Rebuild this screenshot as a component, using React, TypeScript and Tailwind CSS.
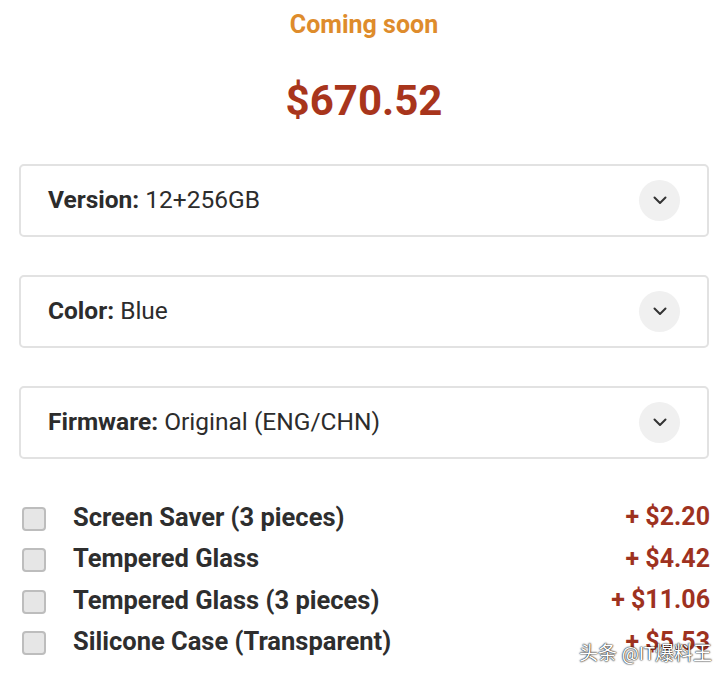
const options = [
  { label: "Version:", value: "12+256GB" },
  { label: "Color:", value: "Blue" },
  { label: "Firmware:", value: "Original (ENG/CHN)" },
]

const extras = [
  { name: "Screen Saver (3 pieces)", price: "+ $2.20" },
  { name: "Tempered Glass", price: "+ $4.42" },
  { name: "Tempered Glass (3 pieces)", price: "+ $11.06" },
  { name: "Silicone Case (Transparent)", price: "+ $5.53" },
]

const Chevron = () => (
  <div className="w-[41px] h-[41px] rounded-full bg-[#f0f0f0] flex items-center justify-center">
    <svg width="14" height="9" viewBox="0 0 14 9" fill="none">
      <path d="M1.5 1.5 7 7l5.5-5.5" stroke="#333" strokeWidth="2" strokeLinecap="round" strokeLinejoin="round" />
    </svg>
  </div>
)

export default function App() {
  return (
    <div
      className="w-[728px] h-[680px] bg-white overflow-hidden relative"
      style={{ fontFamily: "Roboto, 'Noto Sans CJK SC', sans-serif" }}
    >
      <div className="flex flex-col items-center pt-[8px]">
        <div className="text-[25px] leading-[34px] font-bold text-[#de8c2c]">Coming soon</div>
        <div className="mt-[34px] text-[42px] leading-[50px] font-bold text-[#a8351c]">$670.52</div>
      </div>

      <div className="flex flex-col gap-[38px] px-[19px] mt-[38px]">
        {options.map((o) => (
          <div
            key={o.label}
            className="h-[73px] border-2 border-[#e2e2e2] rounded-[5px] flex items-center justify-between pl-[27px] pr-[27px]"
          >
            <div className="text-[24.5px] text-[#2c2c2c]">
              <span className="font-bold">{o.label}</span> {o.value}
            </div>
            <Chevron />
          </div>
        ))}
      </div>

      <div className="flex flex-col mt-[37px] pl-[22px] pr-[18px]">
        {extras.map((e) => (
          <div key={e.name} className="h-[41.5px] flex items-center">
            <div className="w-[24px] h-[24px] rounded-[4px] border-2 border-[#bdbdbd] bg-[#e6e6e6] mt-[4px]" />
            <div className="ml-[27px] flex-1 text-[25.5px] font-bold text-[#2e2e2e]">{e.name}</div>
            <div className="text-[25px] font-bold text-[#9e321f]">{e.price}</div>
          </div>
        ))}
      </div>

      <div
        className="absolute right-[16px] bottom-[12px] text-[19px] text-white"
        style={{ textShadow: "0 0 2px #000, 0 0 1px #000" }}
      >
        头条 @IT爆料王
      </div>
    </div>
  )
}
